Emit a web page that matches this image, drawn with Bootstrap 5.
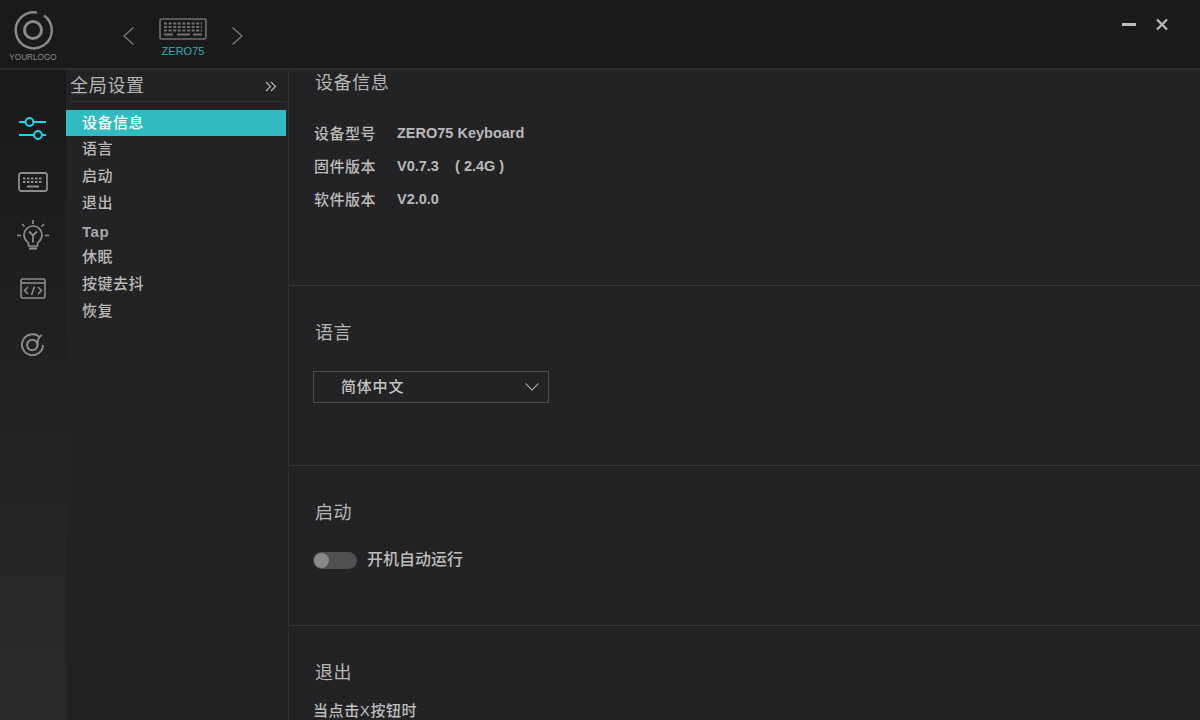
<!DOCTYPE html>
<html lang="zh-CN">
<head>
<meta charset="UTF-8">
<title>ZERO75</title>
<link href="https://cdn.jsdelivr.net/npm/bootstrap@5.3.3/dist/css/bootstrap.min.css" rel="stylesheet">
<script src="https://cdn.jsdelivr.net/npm/bootstrap@5.3.3/dist/js/bootstrap.bundle.min.js"></script>
<style>
html, body { height: 100%; }
body { width: 1200px; height: 720px; overflow: hidden; background: #232325; color: #bdbdbd; font-family: "Liberation Sans", "Noto Sans CJK SC", sans-serif; }
.topbar { height: 70px; background: #1a1a1b; border-bottom: 2px solid #2e2e30; }
.logo-box { width: 66px; padding-top: 10px; color: #8a8a8a; }
.logo-text { font-size: 8.2px; line-height: 1; margin-top: 4px; color: #8b8b8b; }
.device-nav { margin-left: 56px; margin-top: 18px; gap: 23px; }
.device-label { font-size: 11px; line-height: 1; color: #28b3b5; margin-top: 6px; }
.win-btns { gap: 20px; padding: 17px 32px 0 0; }
.main-area { height: 650px; }
.rail { width: 66px; background: linear-gradient(#191919, #2b2b2c); padding-top: 31px; }
.rail-item { height: 54px; }
.rail-item.code-item { height: 52px; padding-bottom: 1px; margin-bottom: 2px; }
.side-panel { width: 223px; background: #232325; border-right: 1px solid #2f2f31; }
.side-head { height: 32px; margin: 0 2px 0 4px; padding-top: 3px; border-bottom: 1px solid #333335; font-size: 18px; line-height: 26px; color: #b5b5b5; letter-spacing: 0.7px; }
.collapse-arrow { margin: 8px 9px 0 0; }
.side-list { margin-top: 8px; width: 220px; }
.side-list .list-group-item { background: transparent; border: 0; border-radius: 0; color: #b9b9b9; height: 27px; padding: 0 0 0 16px; font-size: 15px; line-height: 26px; font-weight: 500; letter-spacing: 0.5px; }
.side-list .list-group-item.active { background: #2fbcc0; color: #fff; height: 26px; }
.side-list .list-group-item.tap-item { line-height: 29px; color: #aaa; font-weight: 700; }
.content-pane { min-width: 0; }
.set-block { border-bottom: 1px solid #363638; padding-left: 25px; }
.block-info { height: 216px; padding-top: 1px; }
.block-lang { height: 180px; padding-top: 35px; }
.block-boot { height: 160px; padding-top: 35px; }
.block-exit { padding-top: 35px; }
.set-title { font-size: 18px; line-height: 25px; color: #b5b5b5; letter-spacing: 0.6px; margin: 0 0 0 1px; font-weight: 400; }
.info-list { margin-top: 21px; }
.info-row { height: 33px; font-size: 15px; line-height: 33px; font-weight: 500; letter-spacing: 0.5px; }
.info-key { width: 83px; }
.info-val { font-weight: 700; font-size: 14.5px; letter-spacing: 0; color: #b9b9b9; white-space: pre; }
.lang-select { width: 236px; height: 32px; margin-top: 25px; margin-left: -1px; border: 1px solid #4c4c4e; padding: 0 9px 0 27px; font-size: 15px; letter-spacing: 0.8px; color: #c4c4c4; font-weight: 500; }
.switch-row { margin-top: 24px; margin-left: -1px; gap: 10px; font-size: 16px; color: #bdbdbd; font-weight: 500; line-height: 20px; }
.toggle-track { width: 44px; height: 17px; border-radius: 9px; background: #505052; position: relative; }
.toggle-knob { position: absolute; left: 1px; top: 1px; width: 15px; height: 15px; border-radius: 50%; background: #8a8a8a; }
.exit-note { margin: 14px 0 0 -1px; font-size: 15px; font-weight: 500; line-height: 22px; letter-spacing: 0.6px; color: #bdbdbd; }
</style>
</head>
<body>
<div class="topbar d-flex">
  <div class="logo-box d-flex flex-column align-items-center">
    <svg width="40" height="40" viewBox="0 0 40 40" fill="none" stroke="#8a8a8a" stroke-width="2.4">
      <path d="M24 2.600A18 18 0 1 0 31 5.500"/>
      <circle cx="20" cy="20" r="8.500" stroke-width="3"/>
    </svg>
    <div class="logo-text">YOURLOGO</div>
  </div>
  <div class="device-nav d-flex align-items-start">
    <svg class="mt-2" width="14" height="20" viewBox="0 0 14 20" fill="none" stroke="#7c7c7c" stroke-width="1.300"><path d="M11.500 1.500 2 10l9.500 8.500"/></svg>
    <div class="d-flex flex-column align-items-center">
      <svg width="48" height="22" viewBox="0 0 48 22" fill="none">
        <rect x="1" y="1" width="46" height="20" rx="1.500" stroke="#707070" stroke-width="1.600"/>
        <path d="M5 5.500h38M5 9h38M5 12.500h38" stroke="#707070" stroke-width="2" stroke-dasharray="3 1.600"/>
        <path d="M5 16.500h9M18 16.500h13M34 16.500h9" stroke="#707070" stroke-width="2"/>
      </svg>
      <div class="device-label">ZERO75</div>
    </div>
    <svg class="mt-2" width="14" height="20" viewBox="0 0 14 20" fill="none" stroke="#7c7c7c" stroke-width="1.300"><path d="M2.500 1.500 12 10l-9.500 8.500"/></svg>
  </div>
  <div class="win-btns d-flex ms-auto">
    <svg width="14" height="16" viewBox="0 0 14 16"><rect y="6" width="14" height="3" fill="#bdbdbd"/></svg>
    <svg width="12" height="16" viewBox="0 0 12 16" stroke="#bdbdbd" stroke-width="2.200"><path d="M1 2.500l10 10M11 2.500l-10 10"/></svg>
  </div>
</div>

<div class="main-area d-flex">
  <div class="rail d-flex flex-column align-items-center">
    <div class="rail-item d-flex align-items-center">
      <svg width="28" height="26" viewBox="0 0 28 26" fill="none" stroke="#0fdcea" stroke-width="2">
        <path d="M0 7h6.500M14.500 7H27M0 20h15M23 20h4"/>
        <circle cx="10.500" cy="7" r="3.900"/><circle cx="19" cy="20" r="3.900"/>
      </svg>
    </div>
    <div class="rail-item d-flex align-items-center">
      <svg width="30" height="20" viewBox="0 0 30 20" fill="none" stroke="#8c8c8c">
        <rect x="1" y="1" width="28" height="18" rx="2" stroke-width="1.800"/>
        <path d="M5 6.500h20M5 10h20" stroke-width="1.800" stroke-dasharray="2.500 1.500"/>
        <path d="M9 14.500h12" stroke-width="2"/>
      </svg>
    </div>
    <div class="rail-item d-flex align-items-center">
      <svg width="34" height="32" viewBox="0 0 34 32" fill="none" stroke="#8c8c8c" stroke-width="1.700">
        <path d="M17 0v4M6 4l2.500 2.500M28 4l-2.500 2.500M1 15.500h4M29 15.500h4"/>
        <path d="M12.500 26v-2.500c0-1.500-4.500-3-4.500-8.500a9 9 0 0 1 18 0c0 5.500-4.500 7-4.500 8.500V26z"/>
        <path d="M13 11.500l4 4 4-4M17 15.500v7" stroke-width="1.800"/>
        <path d="M13 28.500h8" stroke-width="2.200"/>
      </svg>
    </div>
    <div class="rail-item code-item d-flex align-items-center">
      <svg width="26" height="21" viewBox="0 0 26 21" fill="none" stroke="#8c8c8c" stroke-width="1.600">
        <rect x="1" y="1" width="24" height="19" rx="1.500"/>
        <path d="M1 5h24"/>
        <path d="M8 9l-3.500 3.500L8 16M18 9l3.500 3.500L18 16M14.500 8.500l-3 8.500"/>
      </svg>
    </div>
    <div class="rail-item d-flex align-items-center">
      <svg width="24" height="24" viewBox="0 0 24 24" fill="none" stroke="#8c8c8c" stroke-width="1.900">
        <path d="M18 4.500A10.500 10.500 0 1 0 22 13"/>
        <circle cx="11.300" cy="13" r="5.200" stroke-width="2"/>
        <path d="M16.500 13c0-4.500 1-8.500 4.500-10" stroke-width="1.800"/>
      </svg>
    </div>
  </div>

  <div class="side-panel">
    <div class="side-head d-flex justify-content-between">
      <span>全局设置</span>
      <svg class="collapse-arrow" width="12" height="11" viewBox="0 0 12 11" fill="none" stroke="#b5b5b5" stroke-width="1.200"><path d="M1 1l4.500 4.500L1 10M6 1l4.500 4.500L6 10"/></svg>
    </div>
    <div class="list-group side-list">
      <div class="list-group-item active">设备信息</div>
      <div class="list-group-item">语言</div>
      <div class="list-group-item">启动</div>
      <div class="list-group-item">退出</div>
      <div class="list-group-item tap-item">Tap</div>
      <div class="list-group-item">休眠</div>
      <div class="list-group-item">按键去抖</div>
      <div class="list-group-item">恢复</div>
    </div>
  </div>

  <div class="content-pane flex-grow-1">
    <div class="set-block block-info">
      <h2 class="set-title">设备信息</h2>
      <div class="info-list">
        <div class="info-row d-flex"><div class="info-key">设备型号</div><div class="info-val">ZERO75 Keyboard</div></div>
        <div class="info-row d-flex"><div class="info-key">固件版本</div><div class="info-val">V0.7.3    ( 2.4G )</div></div>
        <div class="info-row d-flex"><div class="info-key">软件版本</div><div class="info-val">V2.0.0</div></div>
      </div>
    </div>
    <div class="set-block block-lang">
      <h2 class="set-title">语言</h2>
      <div class="lang-select d-flex align-items-center justify-content-between">
        <span>简体中文</span>
        <svg width="14" height="8" viewBox="0 0 14 8" fill="none" stroke="#a5a5a5" stroke-width="1.100"><path d="M0.500 0.500 7 7l6.500-6.500"/></svg>
      </div>
    </div>
    <div class="set-block block-boot">
      <h2 class="set-title">启动</h2>
      <div class="switch-row d-flex align-items-center">
        <div class="toggle-track"><div class="toggle-knob"></div></div>
        <span>开机自动运行</span>
      </div>
    </div>
    <div class="set-block block-exit border-0">
      <h2 class="set-title">退出</h2>
      <div class="exit-note">当点击X按钮时</div>
    </div>
  </div>
</div>
</body>
</html>
